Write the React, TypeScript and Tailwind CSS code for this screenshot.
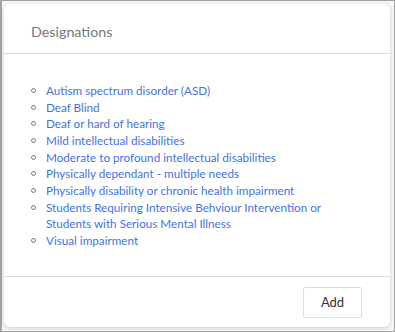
import React from "react";

const items: string[][] = [
  ["Autism spectrum disorder (ASD)"],
  ["Deaf Blind"],
  ["Deaf or hard of hearing"],
  ["Mild intellectual disabilities"],
  ["Moderate to profound intellectual disabilities"],
  ["Physically dependant - multiple needs"],
  ["Physically disability or chronic health impairment"],
  ["Students Requiring Intensive Behviour Intervention or", "Students with Serious Mental Illness"],
  ["Visual impairment"],
];

export default function App() {
  return (
    <div
      className="w-[395px] h-[332px] border-t border-l-2 border-r border-b border-[#a3a3a3] bg-[#f7f7f7] pl-[2px] pt-[3px] pr-[4px] pb-[4px]"
      style={{ fontFamily: "Lato, 'Open Sans', sans-serif" }}
    >
      <div className="h-full bg-white rounded-[6px] shadow-[0_1px_4px_rgba(0,0,0,0.18)] flex flex-col">
        <div className="h-[50px] border-b border-[#dcdcdc] flex items-center pl-[27px] pt-[7px]">
          <span className="text-[14.3px] text-[#777777]">Designations</span>
        </div>
        <div className="flex-1 pt-[28px] pl-[27px]">
          <ul className="text-[11.7px] leading-[16.67px] text-[#4272e8]">
            {items.map((lines, i) => (
              <li key={i} className="flex">
                <span className="w-[15px] shrink-0 flex items-start pt-[6px]">
                  <span className="block w-[5px] h-[5px] rounded-full border border-[#777]" />
                </span>
                <span>
                  {lines.map((l, j) => (
                    <span key={j} className="block">{l}</span>
                  ))}
                </span>
              </li>
            ))}
          </ul>
        </div>
        <div className="h-[51px] border-t border-[#dcdcdc] flex items-start justify-end pt-[10px] pr-[28px]">
          <button className="w-[59px] h-[31px] border border-[#dddddd] rounded-[2px] bg-white text-[13px] text-[#333]">
            Add
          </button>
        </div>
      </div>
    </div>
  );
}
